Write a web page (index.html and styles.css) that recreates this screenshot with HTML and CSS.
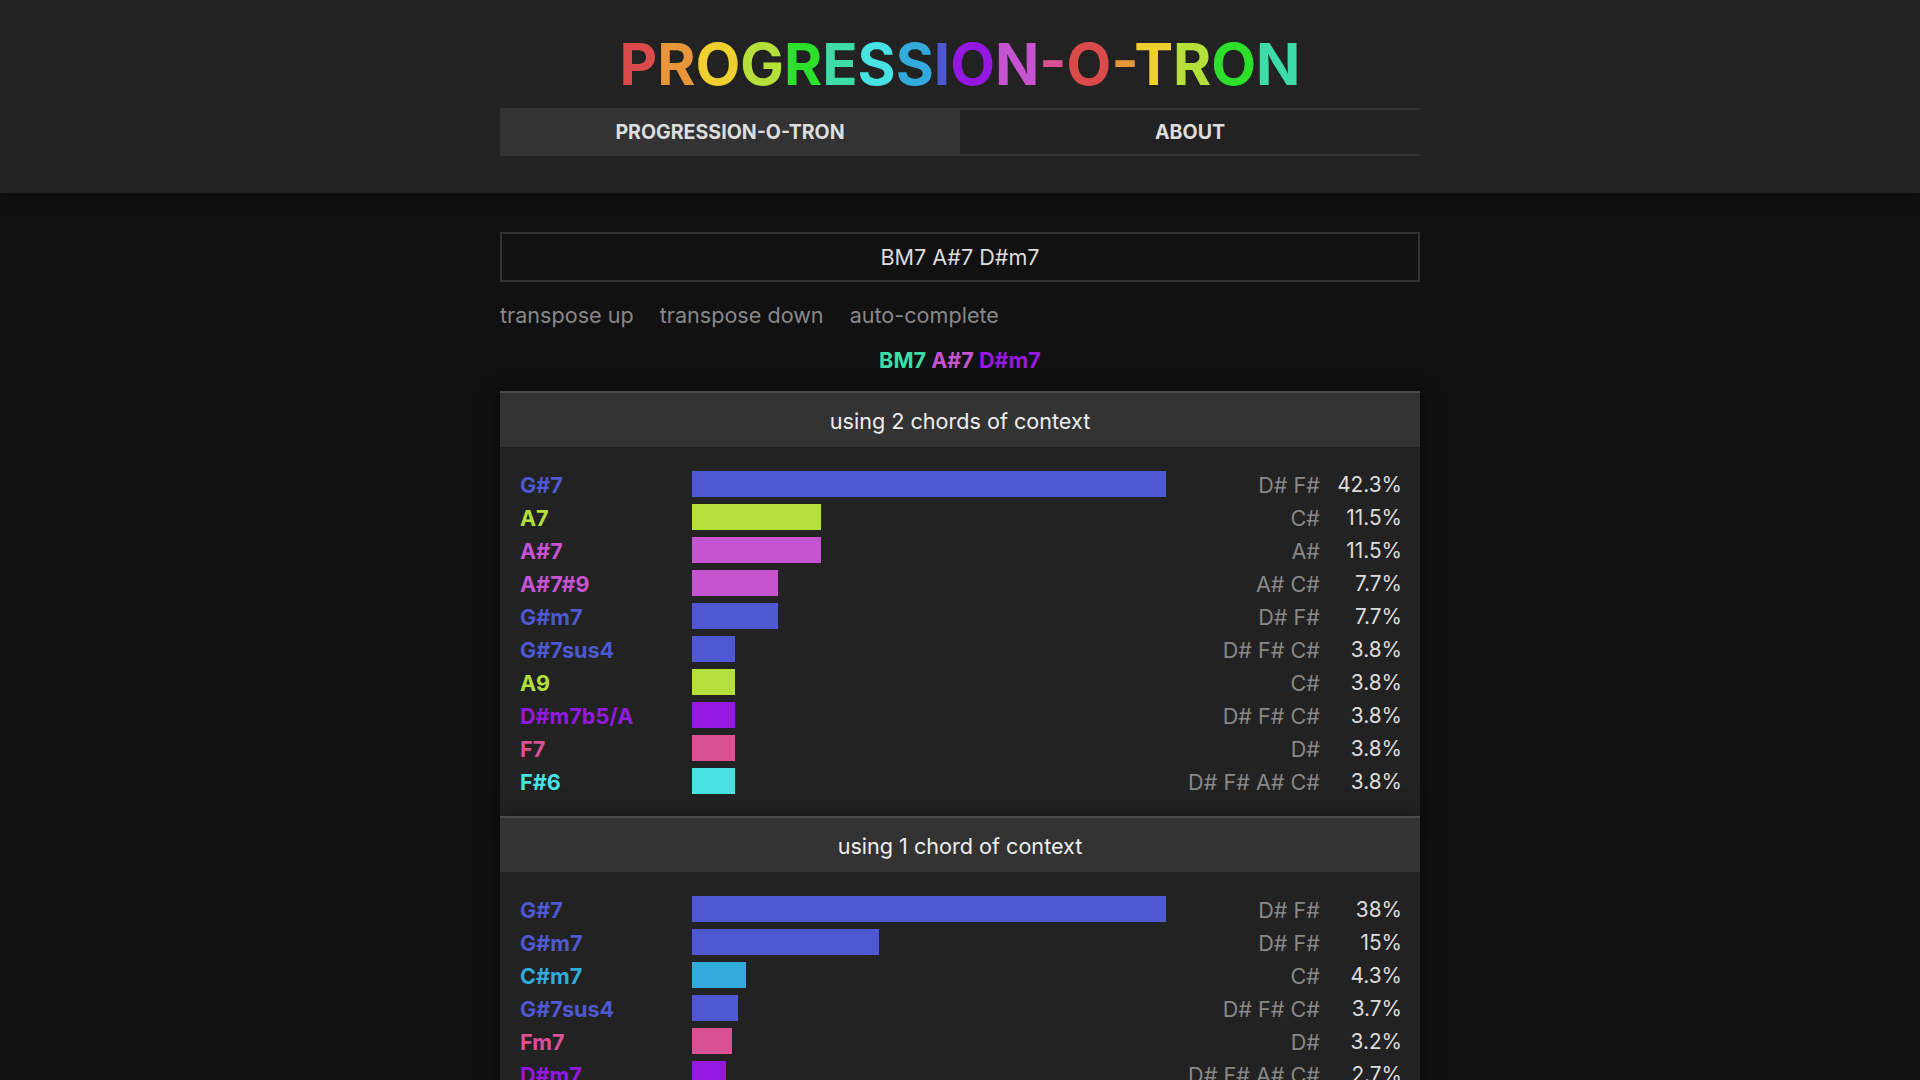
FILE: index.html
```html
<!DOCTYPE html>
<html lang="en">
<head>
<meta charset="utf-8">
<title>Progression-o-tron</title>
<link rel="stylesheet" href="styles.css">
</head>
<body>
<header class="site-header">
  <h1 class="logo"><span class="c0">P</span><span class="c1">R</span><span class="c2">O</span><span class="c3">G</span><span class="c4">R</span><span class="c5">E</span><span class="c6">S</span><span class="c7">S</span><span class="c8">I</span><span class="c9">O</span><span class="c10">N</span><span class="c11">-</span><span class="c0">O</span><span class="c1">-</span><span class="c2">T</span><span class="c3">R</span><span class="c4">O</span><span class="c5">N</span></h1>
  <nav class="tabs">
    <a class="tab active">PROGRESSION-O-TRON</a>
    <a class="tab">ABOUT</a>
  </nav>
</header>

<main class="main">
  <div class="chord-input">BM7 A#7 D#m7</div>
  <div class="actions">
    <a class="action">transpose up</a>
    <a class="action">transpose down</a>
    <a class="action">auto-complete</a>
  </div>
  <div class="current"><span class="c5">BM7</span> <span class="c10">A#7</span> <span class="c9">D#m7</span></div>

  <section class="panel">
    <h2 class="panel-title">using 2 chords of context</h2>
    <div class="rows">
      <div class="row"><span class="label c8">G#7</span><span class="track"><span class="bar b8" style="width:100%"></span></span><span class="notes">D# F#</span><span class="pct">42.3%</span></div>
      <div class="row"><span class="label c3">A7</span><span class="track"><span class="bar b3" style="width:27.2%"></span></span><span class="notes">C#</span><span class="pct">11.5%</span></div>
      <div class="row"><span class="label c10">A#7</span><span class="track"><span class="bar b10" style="width:27.2%"></span></span><span class="notes">A#</span><span class="pct">11.5%</span></div>
      <div class="row"><span class="label c10">A#7#9</span><span class="track"><span class="bar b10" style="width:18.2%"></span></span><span class="notes">A# C#</span><span class="pct">7.7%</span></div>
      <div class="row"><span class="label c8">G#m7</span><span class="track"><span class="bar b8" style="width:18.2%"></span></span><span class="notes">D# F#</span><span class="pct">7.7%</span></div>
      <div class="row"><span class="label c8">G#7sus4</span><span class="track"><span class="bar b8" style="width:9%"></span></span><span class="notes">D# F# C#</span><span class="pct">3.8%</span></div>
      <div class="row"><span class="label c3">A9</span><span class="track"><span class="bar b3" style="width:9%"></span></span><span class="notes">C#</span><span class="pct">3.8%</span></div>
      <div class="row"><span class="label c9">D#m7b5/A</span><span class="track"><span class="bar b9" style="width:9%"></span></span><span class="notes">D# F# C#</span><span class="pct">3.8%</span></div>
      <div class="row"><span class="label c11">F7</span><span class="track"><span class="bar b11" style="width:9%"></span></span><span class="notes">D#</span><span class="pct">3.8%</span></div>
      <div class="row"><span class="label c6">F#6</span><span class="track"><span class="bar b6" style="width:9%"></span></span><span class="notes">D# F# A# C#</span><span class="pct">3.8%</span></div>
    </div>
  </section>

  <section class="panel">
    <h2 class="panel-title">using 1 chord of context</h2>
    <div class="rows">
      <div class="row"><span class="label c8">G#7</span><span class="track"><span class="bar b8" style="width:100%"></span></span><span class="notes">D# F#</span><span class="pct">38%</span></div>
      <div class="row"><span class="label c8">G#m7</span><span class="track"><span class="bar b8" style="width:39.5%"></span></span><span class="notes">D# F#</span><span class="pct">15%</span></div>
      <div class="row"><span class="label c7">C#m7</span><span class="track"><span class="bar b7" style="width:11.3%"></span></span><span class="notes">C#</span><span class="pct">4.3%</span></div>
      <div class="row"><span class="label c8">G#7sus4</span><span class="track"><span class="bar b8" style="width:9.7%"></span></span><span class="notes">D# F# C#</span><span class="pct">3.7%</span></div>
      <div class="row"><span class="label c11">Fm7</span><span class="track"><span class="bar b11" style="width:8.4%"></span></span><span class="notes">D#</span><span class="pct">3.2%</span></div>
      <div class="row"><span class="label c9">D#m7</span><span class="track"><span class="bar b9" style="width:7.1%"></span></span><span class="notes">D# F# A# C#</span><span class="pct">2.7%</span></div>
    </div>
  </section>
</main>
</body>
</html>
```

FILE: styles.css
```css
html {
  scrollbar-width: none;
}
html::-webkit-scrollbar {
  display: none;
}
body {
  margin: 0;
  background: #111111;
  color: #dddddd;
  font-family: Inter, "Noto Sans", "Liberation Sans", sans-serif;
}

.site-header {
  background: #222222;
  padding: 29px 0 37px;
  box-shadow: 0 0 16px rgba(0, 0, 0, 0.6);
  position: relative;
}
.logo {
  margin: 0;
  text-align: center;
  font-size: 58.2px;
  line-height: 70px;
  font-weight: 700;
}
.tabs {
  width: 920px;
  margin: 9px auto 0;
  display: flex;
  border-top: 2px solid #333333;
  border-bottom: 2px solid #333333;
}
.tab {
  flex: 1;
  height: 44px;
  display: flex;
  align-items: center;
  justify-content: center;
  font-size: 19.6px;
  font-weight: 700;
  color: #dddddd;
}
.tab.active {
  background: #333333;
}

.c0 { color: #dc4b4b; }
.c1 { color: #e8963c; }
.c2 { color: #f0d030; }
.c3 { color: #b5e03c; }
.c4 { color: #2ce02c; }
.c5 { color: #3ddca8; }
.c6 { color: #48e2e2; }
.c7 { color: #32aadc; }
.c8 { color: #4d58d1; }
.c9 { color: #9418e0; }
.c10 { color: #c653d0; }
.c11 { color: #d95095; }

.b3 { background: #b5e03c; }
.b6 { background: #48e2e2; }
.b7 { background: #32aadc; }
.b8 { background: #4d58d1; }
.b9 { background: #9418e0; }
.b10 { background: #c653d0; }
.b11 { background: #d95095; }

.main {
  width: 920px;
  margin: 39px auto 0;
}
.chord-input {
  height: 46px;
  border: 2px solid #333333;
  background: #111111;
  display: flex;
  align-items: center;
  justify-content: center;
  font-size: 21.6px;
  color: #dddddd;
}
.actions {
  margin-top: 20px;
  display: flex;
  gap: 26px;
  font-size: 21.6px;
  line-height: 26px;
}
.action {
  color: #888888;
}
.current {
  margin-top: 19px;
  text-align: center;
  font-size: 21.6px;
  line-height: 26px;
  font-weight: 700;
}

.panel {
  margin-top: 18px;
  border-top: 2px solid #4a4a4a;
  background: #222222;
  box-shadow: 0 0 18px rgba(0, 0, 0, 0.5);
}
.panel + .panel {
  margin-top: 0;
}
.panel-title {
  margin: 0;
  height: 54px;
  padding-top: 2px;
  box-sizing: border-box;
  display: flex;
  align-items: center;
  justify-content: center;
  background: #333333;
  font-size: 21.6px;
  font-weight: 400;
  color: #eeeeee;
}
.rows {
  padding: 22px 18px 24px 20px;
  display: flex;
  flex-direction: column;
  gap: 7px;
}
.row {
  height: 26px;
  display: grid;
  grid-template-columns: 172px 474px 1fr 82px;
  align-items: center;
  font-size: 21.6px;
}
.label {
  font-weight: 700;
  padding-top: 3px;
}
.notes,
.pct {
  padding-top: 2px;
}
.track {
  height: 26px;
  display: flex;
}
.bar {
  height: 26px;
}
.notes {
  text-align: right;
  color: #888888;
}
.pct {
  text-align: right;
  color: #dddddd;
  font-size: 20.8px;
}
```
